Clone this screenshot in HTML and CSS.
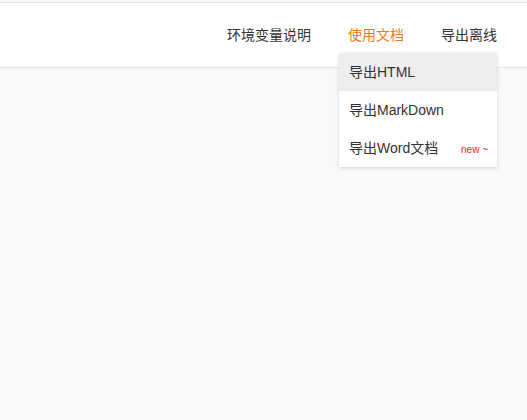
FILE: index.html
```html
<!DOCTYPE html>
<html lang="zh">
<head>
<meta charset="utf-8">
<link rel="stylesheet" href="styles.css">
</head>
<body>
<div class="topline"></div>
<header class="header">
  <nav class="nav">
    <a class="nav-item">环境变量说明</a>
    <div class="nav-drop">
      <a class="nav-item active">使用文档</a>
      <ul class="menu">
        <li class="menu-item hover">导出HTML</li>
        <li class="menu-item">导出MarkDown</li>
        <li class="menu-item">导出Word文档<span class="badge">new ~</span></li>
      </ul>
    </div>
    <a class="nav-item">导出离线</a>
  </nav>
</header>
<main class="content"></main>
</body>
</html>
```
FILE: styles.css
```css
html, body {
  margin: 0;
  padding: 0;
}
body {
  background: #f9f9f9;
  font-family: "Liberation Sans", Arial, "Noto Sans CJK SC", sans-serif;
  font-size: 14px;
  color: #333;
  height: 420px;
}
.topline {
  height: 2px;
  background: #f7f7f7;
  border-bottom: 1px solid #e4e4e4;
}
.header {
  background: #fff;
  height: 64px;
  border-bottom: 1px solid #e6e6e6;
  display: flex;
  justify-content: flex-end;
  align-items: center;
  padding-right: 30px;
}
.nav {
  display: flex;
  align-items: center;
  gap: 37px;
  height: 100%;
}
.nav-item {
  display: block;
  color: #333;
  line-height: 20px;
  cursor: pointer;
}
.nav-item.active {
  color: #ef7c1b;
}
.nav-drop {
  position: relative;
}
.menu {
  position: absolute;
  left: -9px;
  top: 28px;
  width: 158px;
  margin: 0;
  padding: 0;
  list-style: none;
  background: #fff;
  box-shadow: 0 1px 4px rgba(0, 0, 0, 0.16);
  z-index: 10;
}
.menu-item {
  position: relative;
  height: 38px;
  line-height: 38px;
  padding-left: 10px;
  color: #333;
  white-space: nowrap;
}
.menu-item.hover {
  background: #eeeeee;
}
.badge {
  position: absolute;
  right: 9px;
  top: 2px;
  color: #ff1a1a;
  font-size: 10px;
}
```
